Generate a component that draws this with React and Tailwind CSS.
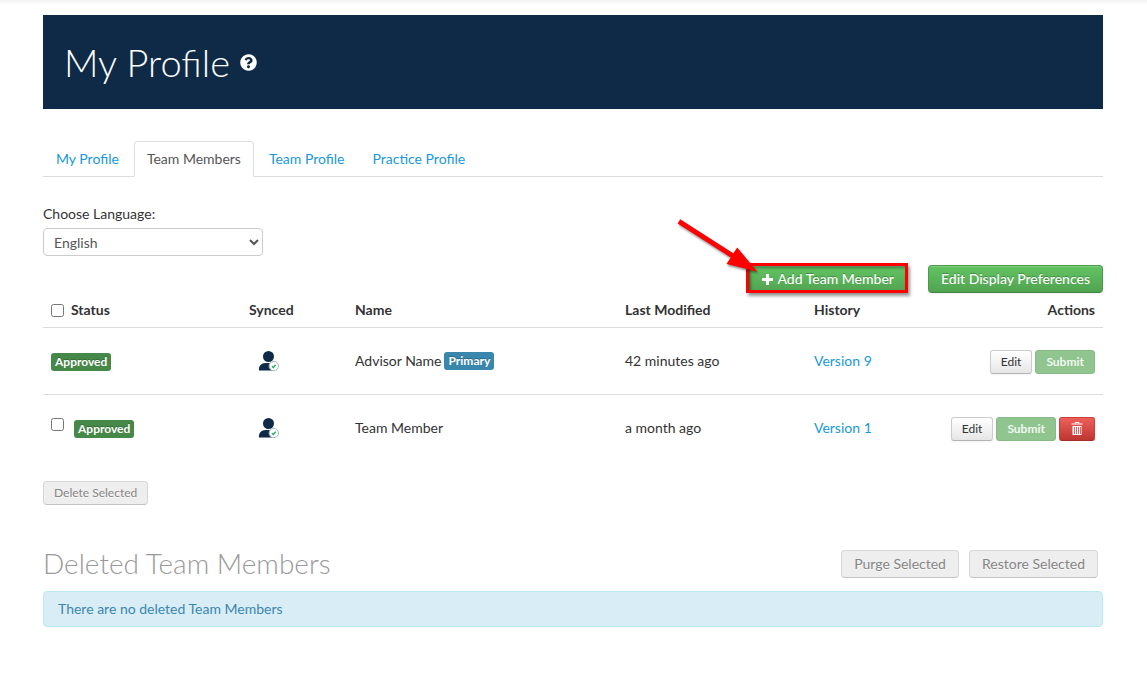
import React, { useState } from "react";
import { FaQuestionCircle } from "react-icons/fa";

const tabs = ["My Profile", "Team Members", "Team Profile", "Practice Profile"];

const members = [
  {
    id: 1,
    name: "Advisor Name",
    status: "Approved",
    primary: true,
    modified: "42 minutes ago",
    version: "Version 9",
  },
  {
    id: 2,
    name: "Team Member",
    status: "Approved",
    primary: false,
    modified: "a month ago",
    version: "Version 1",
  },
];

const greenButton =
  "h-7 rounded border border-[#4a9a4a] border-b-[#3d863d] bg-linear-to-b from-[#62c462] to-[#51a351] px-3 text-sm leading-5 font-medium text-white text-shadow-[0_-1px_0_rgba(0,0,0,0.25)] shadow-[inset_0_1px_0_rgba(255,255,255,0.2),0_1px_2px_rgba(0,0,0,0.05)]";

const disabledButton =
  "rounded border border-[#d6d6d6] border-b-[#c4c4c4] bg-[#eeeeee] text-[#858585] text-shadow-[0_1px_1px_rgba(255,255,255,0.75)]";

const PlusIcon = () => (
  <svg viewBox="0 0 11 11" className="h-[11px] w-[11px]" fill="#fff">
    <path d="M4 0h3v4h4v3H7v4H4V7H0V4h4z" />
  </svg>
);

const TrashIcon = () => (
  <svg viewBox="0 0 12 14" className="mb-0.5 h-3.5 w-3" fill="none" stroke="#fff">
    <path d="M4 2.5V1.5h4v1M0.5 3h11" />
    <path d="M1.5 5h9v9h-9z" fill="#fff" stroke="none" />
    <path d="M3.5 6v7M5.5 6v7M7.5 6v7M9.5 6v7" stroke="#d04540" strokeWidth="0.8" />
  </svg>
);

const SyncedIcon = () => (
  <svg
    viewBox="0 0 21 20"
    className="ml-[9px] h-5 w-[21px]"
    role="img"
    aria-label="Synced"
  >
    <circle cx="10.5" cy="5.5" r="5.5" fill="#0e2a47" />
    <path
      d="M1 19.5C0.3 15.5 3 12 8 12h4c3 0 5 2 5 5v2.5z"
      fill="#0e2a47"
    />
    <circle cx="15.8" cy="15" r="4.7" fill="#fff" stroke="#a9b4c2" />
    <path
      d="M13.9 15.2l1.4 1.3 2.4-2.8"
      fill="none"
      stroke="#27ae60"
      strokeWidth="1.4"
    />
  </svg>
);

const Badge = ({ children, info }) => (
  <span
    className={`inline-block rounded-[3px] px-1 py-0.5 align-middle text-xs leading-[14px] font-bold text-white text-shadow-[0_-1px_0_rgba(0,0,0,0.25)] ${
      info ? "bg-[#3a87ad]" : "bg-[#468847]"
    }`}
  >
    {children}
  </span>
);

// Red frame and arrow drawn over the add button
const Callout = () => (
  <>
    <span className="pointer-events-none absolute -top-0.5 -right-px bottom-0 -left-[3px] border-3 border-[#fe0000] shadow-[2px_3px_3px_rgba(0,0,0,0.4),inset_2px_2px_3px_rgba(0,0,0,0.35)]" />
    <svg
      viewBox="0 0 90 60"
      className="pointer-events-none absolute -top-[47px] -left-[73px] h-[60px] w-[90px] drop-shadow-[1px_2px_1px_rgba(0,0,0,0.4)]"
      fill="#fe0000"
    >
      <path d="M4.2 1.2L57.3 35.3 61.2 29.5 81.5 53.7 50.5 46.1 54.7 39.6 1.6 5.5z" />
    </svg>
  </>
);

const MembersTable = () => {
  const [checked, setChecked] = useState([]);

  const selectable = members.filter((m) => !m.primary).map((m) => m.id);
  const allChecked = checked.length === selectable.length;

  const toggle = (id) => {
    setChecked((prev) =>
      prev.includes(id) ? prev.filter((x) => x !== id) : [...prev, id]
    );
  };

  return (
    <table className="w-full table-fixed text-left">
      <thead>
        <tr className="h-[34px] border-b border-[#dddddd]">
          <th className="w-[198px] px-2 font-bold">
            <label className="flex items-center gap-[7px]">
              <input
                type="checkbox"
                className="mt-0.5"
                checked={allChecked}
                onChange={() => setChecked(allChecked ? [] : selectable)}
              />
              Status
            </label>
          </th>
          <th className="w-[106px] px-2 font-bold">Synced</th>
          <th className="w-[270px] px-2 font-bold">Name</th>
          <th className="w-[189px] px-2 font-bold">Last Modified</th>
          <th className="w-[110px] px-2 font-bold">History</th>
          <th className="px-2 text-right font-bold">Actions</th>
        </tr>
      </thead>
      <tbody>
        {members.map((member) => (
          <tr
            key={member.id}
            className="h-[67px] border-b border-[#dddddd] last:border-b-0"
          >
            <td className="px-2 pt-0.5">
              <div className="flex items-center">
                {!member.primary && (
                  <input
                    type="checkbox"
                    className="mr-2.5 mb-2"
                    aria-label={`Select ${member.name}`}
                    checked={checked.includes(member.id)}
                    onChange={() => toggle(member.id)}
                  />
                )}
                <Badge>{member.status}</Badge>
              </div>
            </td>
            <td className="px-2">
              <SyncedIcon />
            </td>
            <td className="px-2">
              <div className="flex items-center gap-[3px]">
                {member.name}
                {member.primary && <Badge info>Primary</Badge>}
              </div>
            </td>
            <td className="px-2">{member.modified}</td>
            <td className="px-2">
              <a href="#history" className="text-[#1998db]">
                {member.version}
              </a>
            </td>
            <td className="px-2 pt-0.5">
              <div className="flex justify-end gap-[3px] text-xs">
                <button
                  type="button"
                  className="h-6 rounded-[3px] border border-[#cccccc] border-b-[#b3b3b3] bg-linear-to-b from-white to-[#e6e6e6] px-2.5 shadow-[0_1px_2px_rgba(0,0,0,0.05)]"
                >
                  Edit
                </button>
                <button
                  type="button"
                  disabled
                  className="h-6 rounded-[3px] border border-[#86bb86] bg-[#90c590] px-2.5 font-bold text-[#f0f8f0]"
                >
                  Submit
                </button>
                {!member.primary && (
                  <button
                    type="button"
                    aria-label="Delete"
                    className="flex h-6 w-9 items-center justify-center rounded-[3px] border border-[#c9403b] border-b-[#a52d28] bg-linear-to-b from-[#ee5f5b] to-[#bd362f]"
                  >
                    <TrashIcon />
                  </button>
                )}
              </div>
            </td>
          </tr>
        ))}
      </tbody>
    </table>
  );
};

const App = () => {
  const [activeTab, setActiveTab] = useState("Team Members");

  return (
    <div className="min-h-screen bg-white font-['Lato',sans-serif] text-sm leading-5 text-[#333333]">
      <div className="h-[15px] bg-linear-to-b from-[#f4f4f4] to-white to-30%" />
      <main className="pr-11 pl-[43px]">
        <header className="flex h-[94px] items-center gap-2.5 bg-[#0e2a47] px-[21px] text-white">
          <h1 className="pb-px text-[38px] leading-10 font-light">My Profile</h1>
          <FaQuestionCircle className="h-[17px] w-[17px]" />
        </header>

        {/* Tabs */}
        <nav className="mt-8 flex gap-0.5 border-b border-[#dddddd]">
          {tabs.map((tab) => (
            <a
              key={tab}
              href="#tab"
              onClick={() => setActiveTab(tab)}
              className={`-mb-px rounded-t border px-3 py-[7px] ${
                activeTab === tab
                  ? "border-[#dddddd] border-b-white bg-white text-[#555555]"
                  : "border-transparent text-[#1998db]"
              }`}
            >
              {tab}
            </a>
          ))}
        </nav>

        <div className="mt-[27px] flex flex-col gap-1">
          <label htmlFor="language">Choose Language:</label>
          <select
            id="language"
            className="h-7 w-[220px] rounded border border-[#cccccc] bg-white px-1.5 text-[#555555]"
          >
            <option>English</option>
            <option>French</option>
          </select>
        </div>

        <div className="mt-[9px] flex justify-end gap-[21px]">
          <div className="relative">
            <button
              type="button"
              className={`${greenButton} flex items-center gap-1`}
            >
              <PlusIcon />
              Add Team Member
            </button>
            <Callout />
          </div>
          <button type="button" className={greenButton}>
            Edit Display Preferences
          </button>
        </div>

        <MembersTable />

        <button
          type="button"
          disabled
          className={`${disabledButton} mt-5 h-6 px-2.5 text-xs`}
        >
          Delete Selected
        </button>

        {/* Deleted members */}
        <section className="mt-[38px]">
          <div className="flex items-center justify-between pr-[5px]">
            <h2 className="pb-0.5 text-[28px] leading-10 font-light text-[#999999]">
              Deleted Team Members
            </h2>
            <div className="flex gap-2.5">
              <button
                type="button"
                disabled
                className={`${disabledButton} h-7 px-3`}
              >
                Purge Selected
              </button>
              <button
                type="button"
                disabled
                className={`${disabledButton} h-7 px-3`}
              >
                Restore Selected
              </button>
            </div>
          </div>
          <div className="mt-1.5 rounded border border-[#bce8f1] bg-[#d9edf7] px-3.5 py-2 leading-[18px] text-[#3a87ad]">
            There are no deleted Team Members
          </div>
        </section>
      </main>
    </div>
  );
};

export default App;
